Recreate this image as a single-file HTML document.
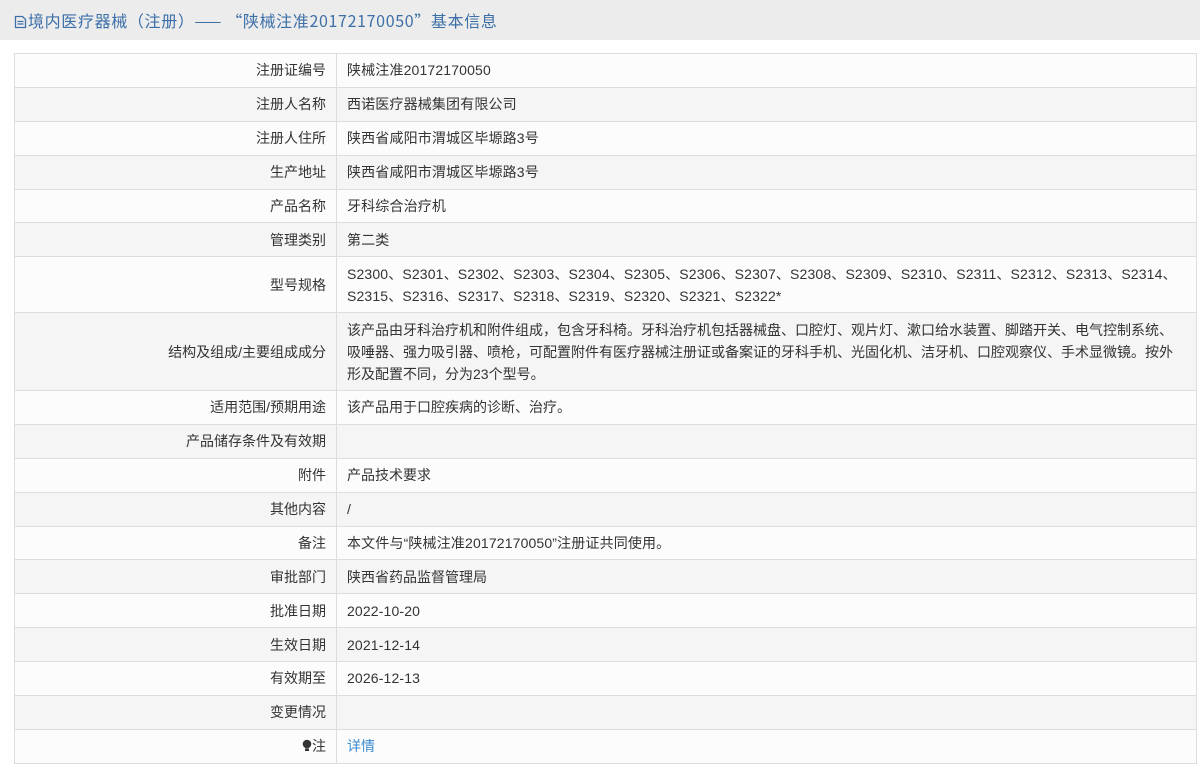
<!DOCTYPE html>
<html><head><meta charset="utf-8"><style>
body{margin:0;background:#fff;font-family:"Liberation Sans","Noto Sans CJK SC",sans-serif;width:1200px;height:769px;overflow:hidden}
.hd{height:40px;background:#ececec;color:#3c6fa8;font-size:16px;line-height:40px;padding-left:14px;font-family:"Noto Sans CJK SC",sans-serif;letter-spacing:0.65px}
.hd svg{vertical-align:-2px;margin-right:1px}
table{position:absolute;left:14px;top:53px;width:1183px;border-collapse:collapse;font-size:14px;color:#333}
td{border:1px solid #ddd;padding:5.45px 10px;line-height:22px;vertical-align:middle}
td.l{width:301px;text-align:right}
td.v{letter-spacing:0.15px}
tr:nth-child(odd){background:#fcfcfc}
tr:nth-child(even){background:#f5f5f5}
a{color:#3b8bd0;text-decoration:none}
</style></head><body>
<div class="hd"><svg width="13" height="14" viewBox="0 0 13 14"><path d="M1.5 1.5h7l3 3v8h-10z M3.5 6.5h6M3.5 9h6" fill="none" stroke="#3c6fa8" stroke-width="1.3"/></svg>境内医疗器械（注册）—— “陕械注准20172170050”基本信息</div>
<table>
<tr><td class="l">注册证编号</td><td class="v">陕械注准20172170050</td></tr>
<tr><td class="l">注册人名称</td><td class="v">西诺医疗器械集团有限公司</td></tr>
<tr><td class="l">注册人住所</td><td class="v">陕西省咸阳市渭城区毕塬路3号</td></tr>
<tr><td class="l">生产地址</td><td class="v">陕西省咸阳市渭城区毕塬路3号</td></tr>
<tr><td class="l">产品名称</td><td class="v">牙科综合治疗机</td></tr>
<tr><td class="l">管理类别</td><td class="v">第二类</td></tr>
<tr><td class="l">型号规格</td><td class="v">S2300、S2301、S2302、S2303、S2304、S2305、S2306、S2307、S2308、S2309、S2310、S2311、S2312、S2313、S2314、<br>S2315、S2316、S2317、S2318、S2319、S2320、S2321、S2322*</td></tr>
<tr><td class="l">结构及组成/主要组成成分</td><td>该产品由牙科治疗机和附件组成，包含牙科椅。牙科治疗机包括器械盘、口腔灯、观片灯、漱口给水装置、脚踏开关、电气控制系统、<br>吸唾器、强力吸引器、喷枪，可配置附件有医疗器械注册证或备案证的牙科手机、光固化机、洁牙机、口腔观察仪、手术显微镜。按外<br>形及配置不同，分为23个型号。</td></tr>
<tr><td class="l">适用范围/预期用途</td><td>该产品用于口腔疾病的诊断、治疗。</td></tr>
<tr><td class="l">产品储存条件及有效期</td><td></td></tr>
<tr><td class="l">附件</td><td>产品技术要求</td></tr>
<tr><td class="l">其他内容</td><td>/</td></tr>
<tr><td class="l">备注</td><td class="v">本文件与“陕械注准20172170050”注册证共同使用。</td></tr>
<tr><td class="l">审批部门</td><td>陕西省药品监督管理局</td></tr>
<tr><td class="l">批准日期</td><td class="v">2022-10-20</td></tr>
<tr><td class="l">生效日期</td><td class="v">2021-12-14</td></tr>
<tr><td class="l">有效期至</td><td class="v">2026-12-13</td></tr>
<tr><td class="l">变更情况</td><td></td></tr>
<tr><td class="l"><svg width="10" height="13" viewBox="0 0 10 13" style="vertical-align:-1px"><circle cx="5" cy="5" r="4.3" fill="#333"/><rect x="3" y="9.5" width="4" height="2.5" fill="#333"/></svg>注</td><td><a>详情</a></td></tr>
</table>
</body></html>
